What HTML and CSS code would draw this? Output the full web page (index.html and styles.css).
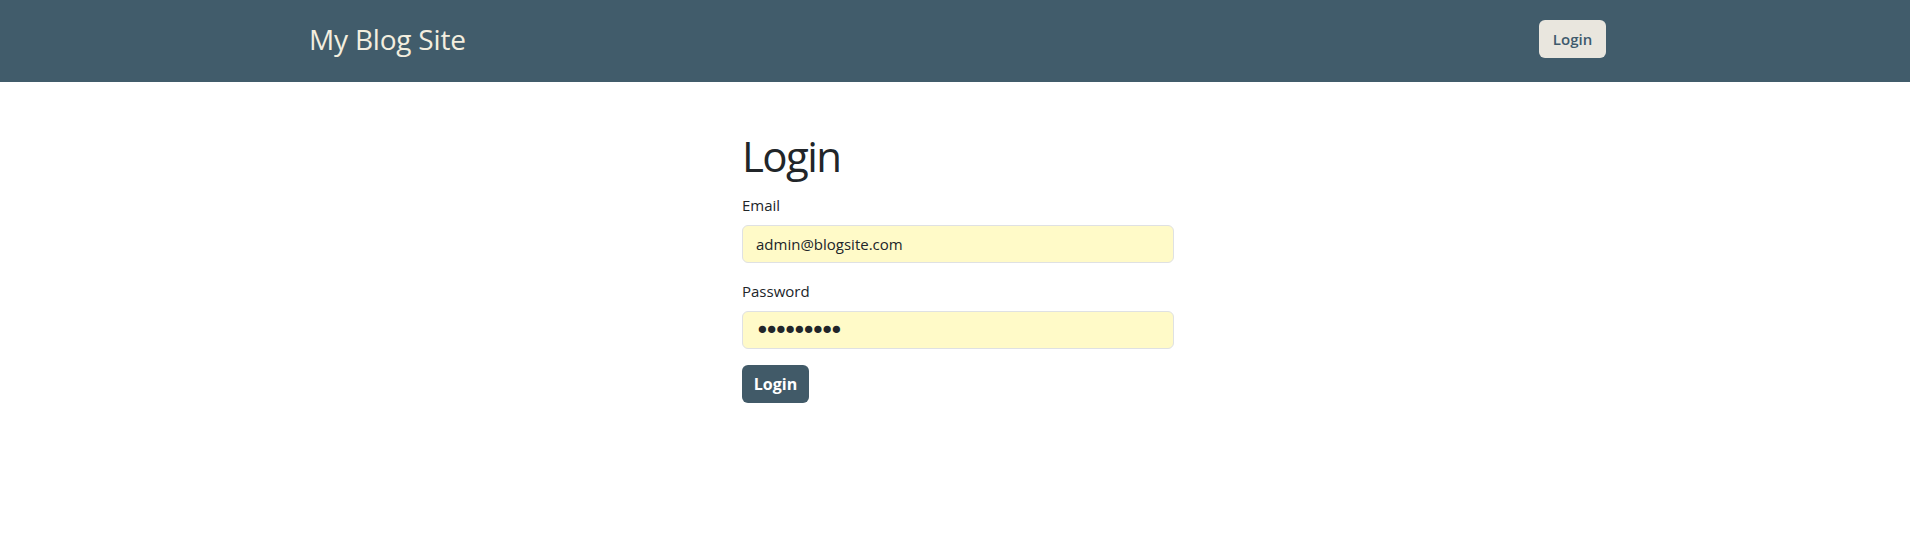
FILE: index.html
```html
<!DOCTYPE html>
<html lang="en">
<head>
<meta charset="utf-8">
<title>My Blog Site - Login</title>
<link rel="stylesheet" href="styles.css">
</head>
<body>
<header class="navbar">
  <div class="nav-inner">
    <a class="brand" href="#">My Blog Site</a>
    <button class="btn btn-light" type="button">Login</button>
  </div>
</header>
<main class="page">
  <form class="login-form">
    <h1 class="title">Login</h1>
    <div class="field">
      <label class="label" for="email">Email</label>
      <input class="input" id="email" type="email" value="admin@blogsite.com">
    </div>
    <div class="field">
      <label class="label" for="password">Password</label>
      <input class="input input-password" id="password" type="password" value="password1">
    </div>
    <button class="btn btn-primary" type="button">Login</button>
  </form>
</main>
</body>
</html>
```

FILE: styles.css
```css
* { box-sizing: border-box; }

html, body {
  margin: 0;
  padding: 0;
  background: #ffffff;
  font-family: "Open Sans", "Noto Sans", sans-serif;
  color: #212529;
}

.navbar {
  height: 82px;
  background: #415c6b;
}

.nav-inner {
  height: 100%;
  display: flex;
  align-items: center;
  justify-content: space-between;
  padding: 0 304px 0 309px;
}

.brand {
  font-size: 28px;
  line-height: 1;
  color: #f3eedf;
  text-decoration: none;
  letter-spacing: -0.2px;
  margin-top: -4px;
}

.btn {
  font-family: inherit;
  font-size: 15px;
  font-weight: 600;
  height: 38px;
  width: 67px;
  padding: 0;
  border-radius: 6px;
  border: 1px solid transparent;
  cursor: pointer;
}

.btn-light {
  background: #e9e6de;
  color: #3e5a6c;
  margin-top: -4px;
}

.btn-primary {
  background: #415a68;
  color: #ffffff;
  font-size: 16px;
  font-weight: 700;
}

.page {
  padding-left: 742px;
}

.login-form {
  width: 432px;
  display: flex;
  flex-direction: column;
  align-items: flex-start;
}

.title {
  font-size: 42px;
  font-weight: 400;
  line-height: 1.2;
  letter-spacing: -1.6px;
  margin: 49px 0 12px;
}

.field {
  width: 100%;
  display: flex;
  flex-direction: column;
  margin-bottom: 16px;
}

.label {
  font-size: 15px;
  line-height: 24px;
  margin-bottom: 8px;
}

.input {
  width: 100%;
  height: 38px;
  font-family: inherit;
  font-size: 15px;
  color: #212529;
  background: #fffac8;
  border: 1px solid #dfe1e3;
  border-radius: 6px;
  padding: 0 13px;
  outline: none;
}

.input-password {
  font-family: "DejaVu Sans", sans-serif;
  font-size: 25px;
  letter-spacing: -5.5px;
  padding-left: 12px;
}
```
